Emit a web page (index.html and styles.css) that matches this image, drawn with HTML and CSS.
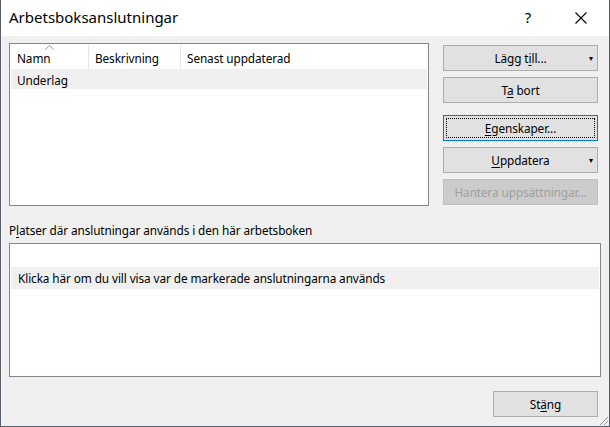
FILE: index.html
```html
<!DOCTYPE html>
<html lang="sv">
  <head>
    <meta charset="UTF-8" />
    <title>Arbetsboksanslutningar</title>
    <link rel="stylesheet" href="styles.css">
  </head>
  <body>
    <div class="window">
      <header class="titlebar">
        <span class="title">Arbetsboksanslutningar</span>
        <span class="help">?</span>
        <span class="close">
          <svg width="12" height="12" viewBox="0 0 12 12"><path d="M0.5 0.5 L11.5 11.5 M11.5 0.5 L0.5 11.5" stroke="#000" stroke-width="1.1" fill="none"/></svg>
        </span>
      </header>

      <main class="content">
        <section class="top">
          <div class="list">
            <div class="list-head">
              <div class="col col-name">
                <svg class="sort" width="9" height="5" viewBox="0 0 9 5"><path d="M0.5 4.5 L4.5 0.5 L8.5 4.5" stroke="#999" fill="none"/></svg>
                Namn
              </div>
              <div class="col col-desc">Beskrivning</div>
              <div class="col col-date">Senast uppdaterad</div>
            </div>
            <div class="list-row selected">Underlag</div>
          </div>

          <div class="buttons">
            <button class="btn split">Lägg t<u>i</u>ll...<span class="arrow">▾</span></button>
            <button class="btn">T<u>a</u> bort</button>
            <button class="btn focused"><span class="focus-ring"><u>E</u>genskaper...</span></button>
            <button class="btn split"><u>U</u>ppdatera<span class="arrow">▾</span></button>
            <button class="btn disabled">Hantera uppsättningar...</button>
          </div>
        </section>

        <section class="usage">
          <div class="usage-label">P<u>l</u>atser där anslutningar används i den här arbetsboken</div>
          <div class="usage-box">
            <div class="usage-row"></div>
            <div class="usage-row selected">Klicka här om du vill visa var de markerade anslutningarna används</div>
          </div>
        </section>

        <footer class="footer">
          <button class="btn close-btn">St<u>ä</u>ng</button>
          <svg class="grip" width="12" height="12" viewBox="0 0 12 12"><path d="M11 3 L3 11 M11 7 L7 11" stroke="#9a9a9a" stroke-width="1" fill="none"/></svg>
        </footer>
      </main>
    </div>
  </body>
</html>
```

FILE: styles.css
```css
* {
  margin: 0;
  padding: 0;
  box-sizing: border-box;
}

body {
  font-family: "Noto Sans", "Open Sans", sans-serif;
  font-size: 11.8px;
  letter-spacing: -0.1px;
  color: #000;
  background: #f0f0f0;
}

.window {
  width: 610px;
  height: 427px;
  border: 1px solid #56606c;
  border-top: none;
  display: flex;
  flex-direction: column;
  background: #f0f0f0;
}

.titlebar {
  height: 36px;
  background: #fff;
  display: flex;
  align-items: center;
  padding-left: 8px;
}

.title {
  font-size: 15px;
  letter-spacing: 0;
  flex: 1;
  padding-bottom: 2px;
}

.help {
  font-size: 15px;
  width: 46px;
  text-align: center;
  margin-right: 7px;
  padding-bottom: 2px;
}

.close {
  width: 46px;
  display: flex;
  justify-content: center;
  margin-right: 5px;
}

.content {
  flex: 1;
  display: flex;
  flex-direction: column;
  padding: 7px 8px 0 8px;
}

.top {
  display: flex;
  justify-content: space-between;
}

.list {
  width: 420px;
  height: 163px;
  border: 1px solid #828790;
  background: #fff;
  padding: 1px;
}

.list-head {
  display: flex;
  height: 24px;
}

.col {
  position: relative;
  padding-left: 6px;
  padding-top: 2px;
  line-height: 22px;
  border-right: 1px solid #e5e5e5;
}

.col-name {
  width: 78px;
}

.col-desc {
  width: 92px;
}

.col-date {
  flex: 1;
  border-right: none;
}

.sort {
  position: absolute;
  left: 34px;
  top: 0;
}

.list-row {
  height: 20px;
  line-height: 22px;
  padding-left: 6px;
}

.selected {
  background: #f0f0f0;
}

.buttons {
  width: 155px;
  margin-right: 3px;
  margin-top: 2px;
  display: flex;
  flex-direction: column;
  gap: 6px;
}

.btn {
  position: relative;
  height: 26px;
  font: inherit;
  letter-spacing: inherit;
  background: #e1e1e1;
  border: 1px solid #adadad;
  color: #000;
}

.btn u {
  text-underline-offset: 2px;
}

.btn .arrow {
  position: absolute;
  right: 4px;
  top: 6px;
  font-size: 8px;
}

.btn.focused {
  margin-top: 6px;
  border: 1px solid #0078d7;
  padding: 2px;
}

.focus-ring {
  display: block;
  height: 100%;
  border: 1px dotted #000;
  line-height: 18px;
}

.btn.disabled {
  background: #cccccc;
  border-color: #bfbfbf;
  color: #a0a0a0;
}

.usage {
  margin-top: 15px;
}

.usage-label {
  line-height: 18px;
}

.usage-label u {
  text-underline-offset: 2px;
}

.usage-box {
  margin-top: 4px;
  width: 592px;
  height: 134px;
  border: 1px solid #828790;
  background: #fff;
  padding: 1px;
}

.usage-row {
  height: 22px;
  line-height: 22px;
  padding-left: 7px;
}

.footer {
  flex: 1;
  display: flex;
  justify-content: flex-end;
  align-items: flex-start;
  position: relative;
  padding-top: 14px;
}

.close-btn {
  width: 105px;
  margin-right: 3px;
}

.grip {
  position: absolute;
  right: -8px;
  bottom: 0;
}
```
